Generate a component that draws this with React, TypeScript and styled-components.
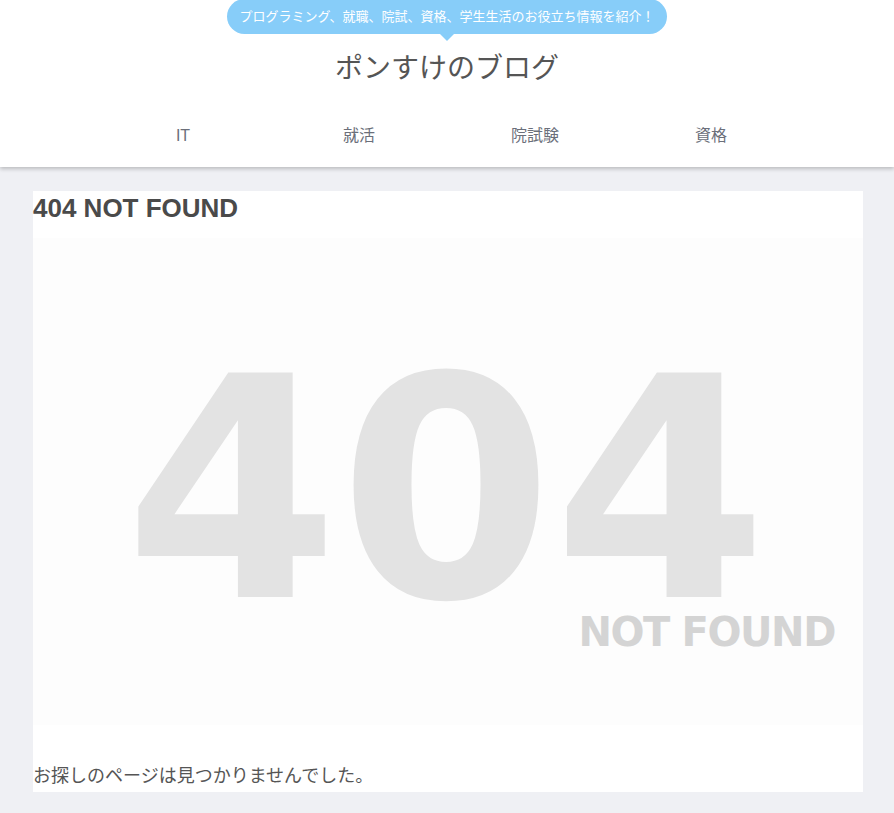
import React from 'react';
import styled, { createGlobalStyle } from 'styled-components';

const GlobalStyle = createGlobalStyle`
    html, body {
        margin: 0;
        padding: 0;
        background: #eff0f4;
        font-family: "Liberation Sans", "Noto Sans CJK JP", sans-serif;
        color: #555;
    }
`;

const Header = styled.header`
    background: #fff;
    box-shadow: 0 2px 4px rgba(0, 0, 0, 0.22);
    height: 167px;
    display: flex;
    flex-direction: column;
    align-items: center;
`;

const Tagline = styled.div`
    position: relative;
    background: #87cdf9;
    color: #fff;
    font-size: 13px;
    height: 35px;
    line-height: 35px;
    padding: 0 12px;
    border-radius: 18px;
    margin-top: -1px;

    &::after {
        content: '';
        position: absolute;
        left: 50%;
        bottom: -7px;
        margin-left: -7px;
        border-left: 7px solid transparent;
        border-right: 7px solid transparent;
        border-top: 7px solid #87cdf9;
    }
`;

const SiteTitle = styled.h1`
    margin: 17px 0 0;
    font-size: 28px;
    font-weight: normal;
    color: #555;
    line-height: 36px;
`;

const Nav = styled.nav`
    display: grid;
    grid-template-columns: repeat(4, 176px);
    margin-top: 39px;
`;

const NavItem = styled.a`
    text-align: center;
    font-size: 16px;
    color: #6b6f7a;
    line-height: 20px;
`;

const Main = styled.main`
    padding: 24px 31px 22px 33px;
`;

const Card = styled.article`
    background: #fff;
    width: 830px;
`;

const Heading = styled.h2`
    margin: 0;
    padding-top: 3px;
    font-size: 26px;
    font-weight: bold;
    color: #4a4a4a;
    line-height: 28px;
`;

const Figure = styled.svg`
    display: block;
    margin-top: 16px;
`;

const Message = styled.p`
    margin: 0;
    padding: 39px 0 4px;
    font-size: 18px;
    line-height: 24px;
    color: #555;
`;

const NotFoundImage: React.FC = () => (
    <Figure width={830} height={487} viewBox="0 0 830 487">
        <rect width="830" height="487" fill="#fdfdfd" />
        <text
            x="413"
            y="359"
            textAnchor="middle"
            fontFamily="DejaVu Sans, sans-serif"
            fontWeight="bold"
            fontSize="308"
            fill="#e3e3e3"
        >
            404
        </text>
        <text
            x="802"
            y="408"
            textAnchor="end"
            letterSpacing="-1.4"
            fontFamily="DejaVu Sans, sans-serif"
            fontWeight="bold"
            fontSize="40"
            fill="#d4d4d4"
        >
            NOT FOUND
        </text>
    </Figure>
);

const App: React.FC = () => {
    const menu = ['IT', '就活', '院試験', '資格'];
    return (
        <>
            <GlobalStyle />
            <Header>
                <Tagline>プログラミング、就職、院試、資格、学生生活のお役立ち情報を紹介！</Tagline>
                <SiteTitle>ポンすけのブログ</SiteTitle>
                <Nav>
                    {menu.map((m) => (
                        <NavItem key={m}>{m}</NavItem>
                    ))}
                </Nav>
            </Header>
            <Main>
                <Card>
                    <Heading>404 NOT FOUND</Heading>
                    <NotFoundImage />
                    <Message>お探しのページは見つかりませんでした。</Message>
                </Card>
            </Main>
        </>
    );
};

export default App;
